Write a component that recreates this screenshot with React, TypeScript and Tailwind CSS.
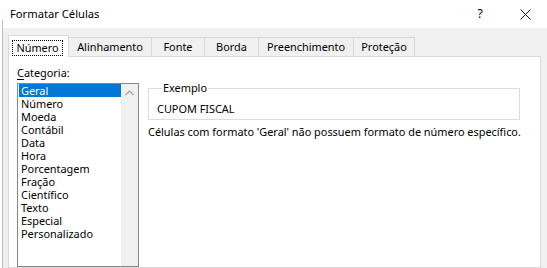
const items = [
  "Geral",
  "Número",
  "Moeda",
  "Contábil",
  "Data",
  "Hora",
  "Porcentagem",
  "Fração",
  "Científico",
  "Texto",
  "Especial",
  "Personalizado",
];

const tabs = [
  { label: "Alinhamento", w: "w-[83px]" },
  { label: "Fonte", w: "w-[53px]" },
  { label: "Borda", w: "w-[54px]" },
  { label: "Preenchimento", w: "w-[95px]" },
  { label: "Proteção", w: "w-[61px]" },
];

export default function App() {
  return (
    <div className="w-[547px] h-[268px] overflow-hidden flex bg-white text-black font-['Noto_Sans',sans-serif] text-[10.9px] leading-[14px]">
      {/* left edge strip */}
      <div className="w-[3px] h-full bg-white flex justify-end">
        <div className="w-px mt-[20px] h-full bg-[#bcbcbc]" />
      </div>

      {/* window */}
      <div className="w-[544px] h-full flex flex-col">
        {/* title bar */}
        <div className="h-[28px] bg-white flex items-center shrink-0">
          <span className="ml-[7px] text-[11.2px]">Formatar Células</span>
          <div className="flex-1" />
          <div className="w-[46px] text-center text-[12px] leading-[14px]">?</div>
          <div className="w-[44px] flex justify-center">
            <svg width="11" height="11" viewBox="0 0 11 11">
              <path d="M0.5 0.5 L10.5 10.5 M10.5 0.5 L0.5 10.5" stroke="#111" strokeWidth="1" />
            </svg>
          </div>
        </div>

        {/* body */}
        <div className="flex-1 bg-[#f0f0f0] pl-[5px] pr-[6px] flex flex-col">
          {/* tabs */}
          <div className="mt-[7px] h-[21px] flex items-end shrink-0">
            <div className="relative z-10 w-[61px] h-[22px] -mb-px bg-white border-t border-l border-r border-[#d9d9d9] pt-[4px] pl-[3px]">
              <div className="w-[51px] h-[16px] border border-dotted border-black flex items-center justify-center">
                Número
              </div>
            </div>
            {tabs.map((t) => (
              <div
                key={t.label}
                className={`${t.w} h-[19px] border-t border-r border-[#d9d9d9] bg-[#f0f0f0] flex items-center justify-center pb-px`}
              >
                {t.label}
              </div>
            ))}
          </div>

          {/* panel */}
          <div className="flex-1 bg-white border border-[#d9d9d9] pl-[8px] pt-[9px] flex gap-[9px]">
            {/* category column */}
            <div className="w-[122px] flex flex-col">
              <div className="h-[14px]">
                <span className="underline underline-offset-2">C</span>ategoria:
              </div>
              <div className="mt-[3px] flex-1 border border-[#828790] flex pl-px">
                <div className="flex-1 flex flex-col">
                  {items.map((it, i) => (
                    <div
                      key={it}
                      className={`h-[13px] leading-[13px] pl-[2px] ${i === 0 ? "bg-[#0078d7] text-white" : ""}`}
                    >
                      {it}
                    </div>
                  ))}
                </div>
                <div className="w-[17px] bg-[#f0f0f0] flex justify-center pt-[6px]">
                  <svg width="9" height="6" viewBox="0 0 9 6">
                    <path d="M0.5 5 L4.5 1 L8.5 5" stroke="#a3a3a3" strokeWidth="1.2" fill="none" />
                  </svg>
                </div>
              </div>
            </div>

            {/* right column */}
            <div className="flex flex-col">
              <fieldset className="mt-[15px] w-[372px] border border-[#dcdcdc] pl-[8px] pt-[7px] pb-[3px]">
                <legend className="ml-[5px] px-px">Exemplo</legend>
                <div>CUPOM FISCAL</div>
              </fieldset>
              <div className="mt-[5px] whitespace-nowrap">
                Células com formato 'Geral' não possuem formato de número específico.
              </div>
            </div>
          </div>
        </div>
      </div>
    </div>
  );
}
